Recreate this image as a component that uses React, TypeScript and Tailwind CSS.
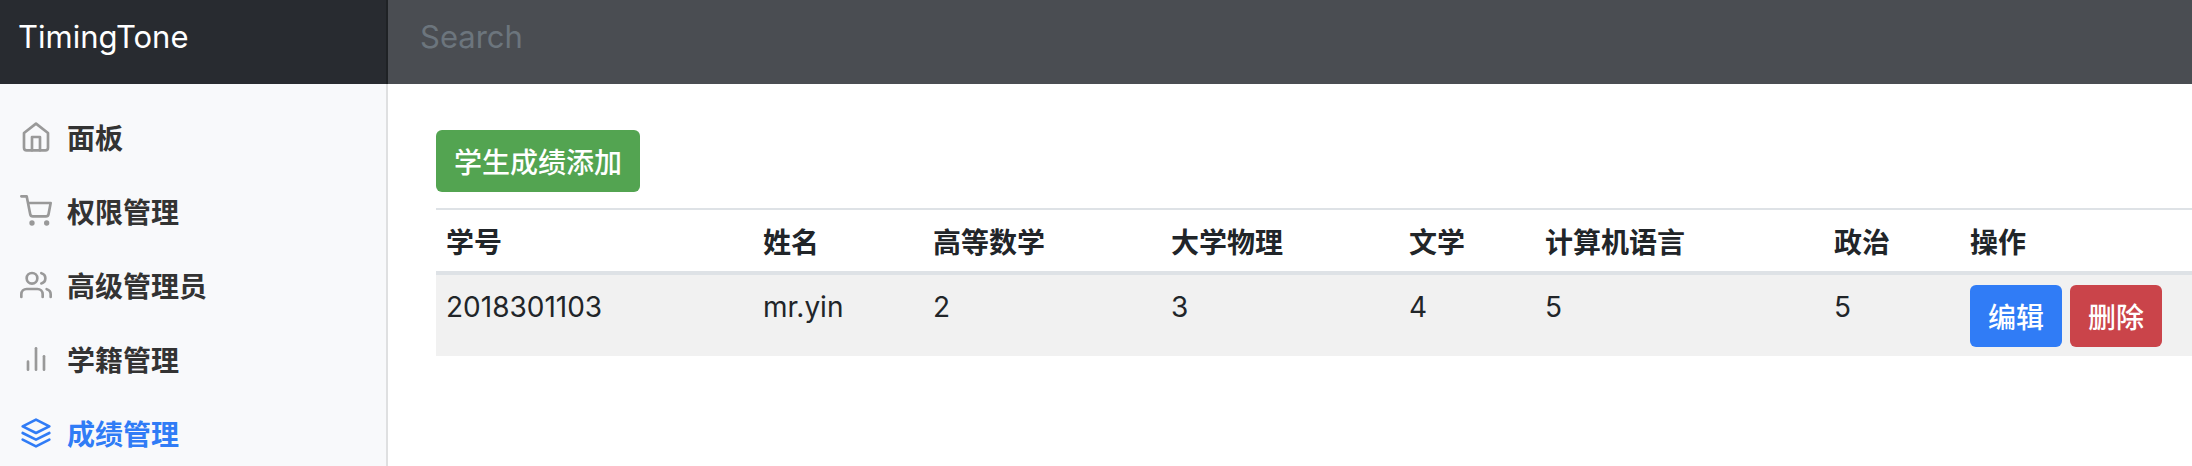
import type { ReactNode } from "react";

type NavItem = { label: string; icon: ReactNode; active?: boolean };

const navItems: NavItem[] = [
  {
    label: "面板",
    icon: (
      <>
        <path d="M3 9l9-7 9 7v11a2 2 0 0 1-2 2H5a2 2 0 0 1-2-2z" />
        <polyline points="9 22 9 12 15 12 15 22" />
      </>
    ),
  },
  {
    label: "权限管理",
    icon: (
      <>
        <circle cx="9" cy="21" r="1" />
        <circle cx="20" cy="21" r="1" />
        <path d="M1 1h4l2.68 13.39a2 2 0 0 0 2 1.61h9.72a2 2 0 0 0 2-1.61L23 6H6" />
      </>
    ),
  },
  {
    label: "高级管理员",
    icon: (
      <>
        <path d="M17 21v-2a4 4 0 0 0-4-4H5a4 4 0 0 0-4 4v2" />
        <circle cx="9" cy="7" r="4" />
        <path d="M23 21v-2a4 4 0 0 0-3-3.87" />
        <path d="M16 3.13a4 4 0 0 1 0 7.75" />
      </>
    ),
  },
  {
    label: "学籍管理",
    icon: (
      <>
        <line x1="18" y1="20" x2="18" y2="10" />
        <line x1="12" y1="20" x2="12" y2="4" />
        <line x1="6" y1="20" x2="6" y2="14" />
      </>
    ),
  },
  {
    label: "成绩管理",
    active: true,
    icon: (
      <>
        <polygon points="12 2 2 7 12 12 22 7 12 2" />
        <polyline points="2 17 12 22 22 17" />
        <polyline points="2 12 12 17 22 12" />
      </>
    ),
  },
];

const columns = [
  { label: "学号", width: "w-[317px]" },
  { label: "姓名", width: "w-[170px]" },
  { label: "高等数学", width: "w-[238px]" },
  { label: "大学物理", width: "w-[238px]" },
  { label: "文学", width: "w-[136px]" },
  { label: "计算机语言", width: "w-[289px]" },
  { label: "政治", width: "w-[136px]" },
  { label: "操作", width: "" },
];

const rows = [["2018301103", "mr.yin", "2", "3", "4", "5", "5"]];

const buttonBase = "h-[62px] rounded-md px-[18px] pt-1 font-medium text-white";

export default function App() {
  return (
    <div className="flex min-h-screen flex-col bg-white font-['Inter','Noto_Sans_CJK_SC',sans-serif] text-[28px] leading-[42px] text-[#212529]">
      <header className="flex h-[84px] bg-[#4a4d52]">
        <a
          href="#"
          className="w-[388px] shrink-0 border-r-2 border-[#1f2225] bg-[#282b30] pt-[13px] pl-[18px] text-[31px] leading-[48px] text-white"
        >
          TimingTone
        </a>
        <input
          type="text"
          aria-label="Search"
          placeholder="Search"
          className="h-[72px] min-w-0 flex-1 bg-transparent px-8 text-[31px] text-white outline-none placeholder:text-[#6c757d]"
        />
      </header>
      <div className="flex flex-1">
        <nav className="w-[388px] shrink-0 border-r-2 border-[#dfe0e1] bg-[#f8f9fb] pt-4">
          <ul>
            {navItems.map((item) => (
              <li key={item.label}>
                <a
                  href="#"
                  className={`flex items-center gap-[15px] px-5 py-[14px] font-bold ${item.active ? "text-[#307cf6]" : "text-[#333333]"}`}
                >
                  <svg
                    viewBox="0 0 24 24"
                    aria-hidden="true"
                    className={`size-8 shrink-0 fill-none stroke-2 ${item.active ? "stroke-[#307cf6]" : "stroke-[#999999]"}`}
                    strokeLinecap="round"
                    strokeLinejoin="round"
                  >
                    {item.icon}
                  </svg>
                  <span className="pt-1">{item.label}</span>
                </a>
              </li>
            ))}
          </ul>
        </nav>
        <main className="min-w-0 flex-1 pt-[46px] pl-12">
          <button type="button" className={`${buttonBase} bg-[#53a451]`}>
            学生成绩添加
          </button>
          <table className="mt-4 w-full table-fixed border-separate border-spacing-0 border-t-2 border-[#dee2e6] text-left">
            <thead>
              <tr>
                {columns.map((column) => (
                  <th
                    key={column.label}
                    scope="col"
                    className={`border-b-4 border-[#dee2e6] px-[10px] pt-3 pb-[7px] font-bold ${column.width}`}
                  >
                    {column.label}
                  </th>
                ))}
              </tr>
            </thead>
            <tbody>
              {rows.map((row) => (
                <tr key={row[0]} className="bg-[#f1f1f1] align-top">
                  {row.map((value, index) => (
                    <td key={index} className="px-[10px] py-[11px]">
                      {value}
                    </td>
                  ))}
                  <td className="px-[10px] pt-[10px] pb-[9px]">
                    <div className="flex gap-2">
                      <button type="button" className={`${buttonBase} bg-[#307cf6]`}>
                        编辑
                      </button>
                      <button type="button" className={`${buttonBase} bg-[#ca444a]`}>
                        删除
                      </button>
                    </div>
                  </td>
                </tr>
              ))}
            </tbody>
          </table>
        </main>
      </div>
    </div>
  );
}
